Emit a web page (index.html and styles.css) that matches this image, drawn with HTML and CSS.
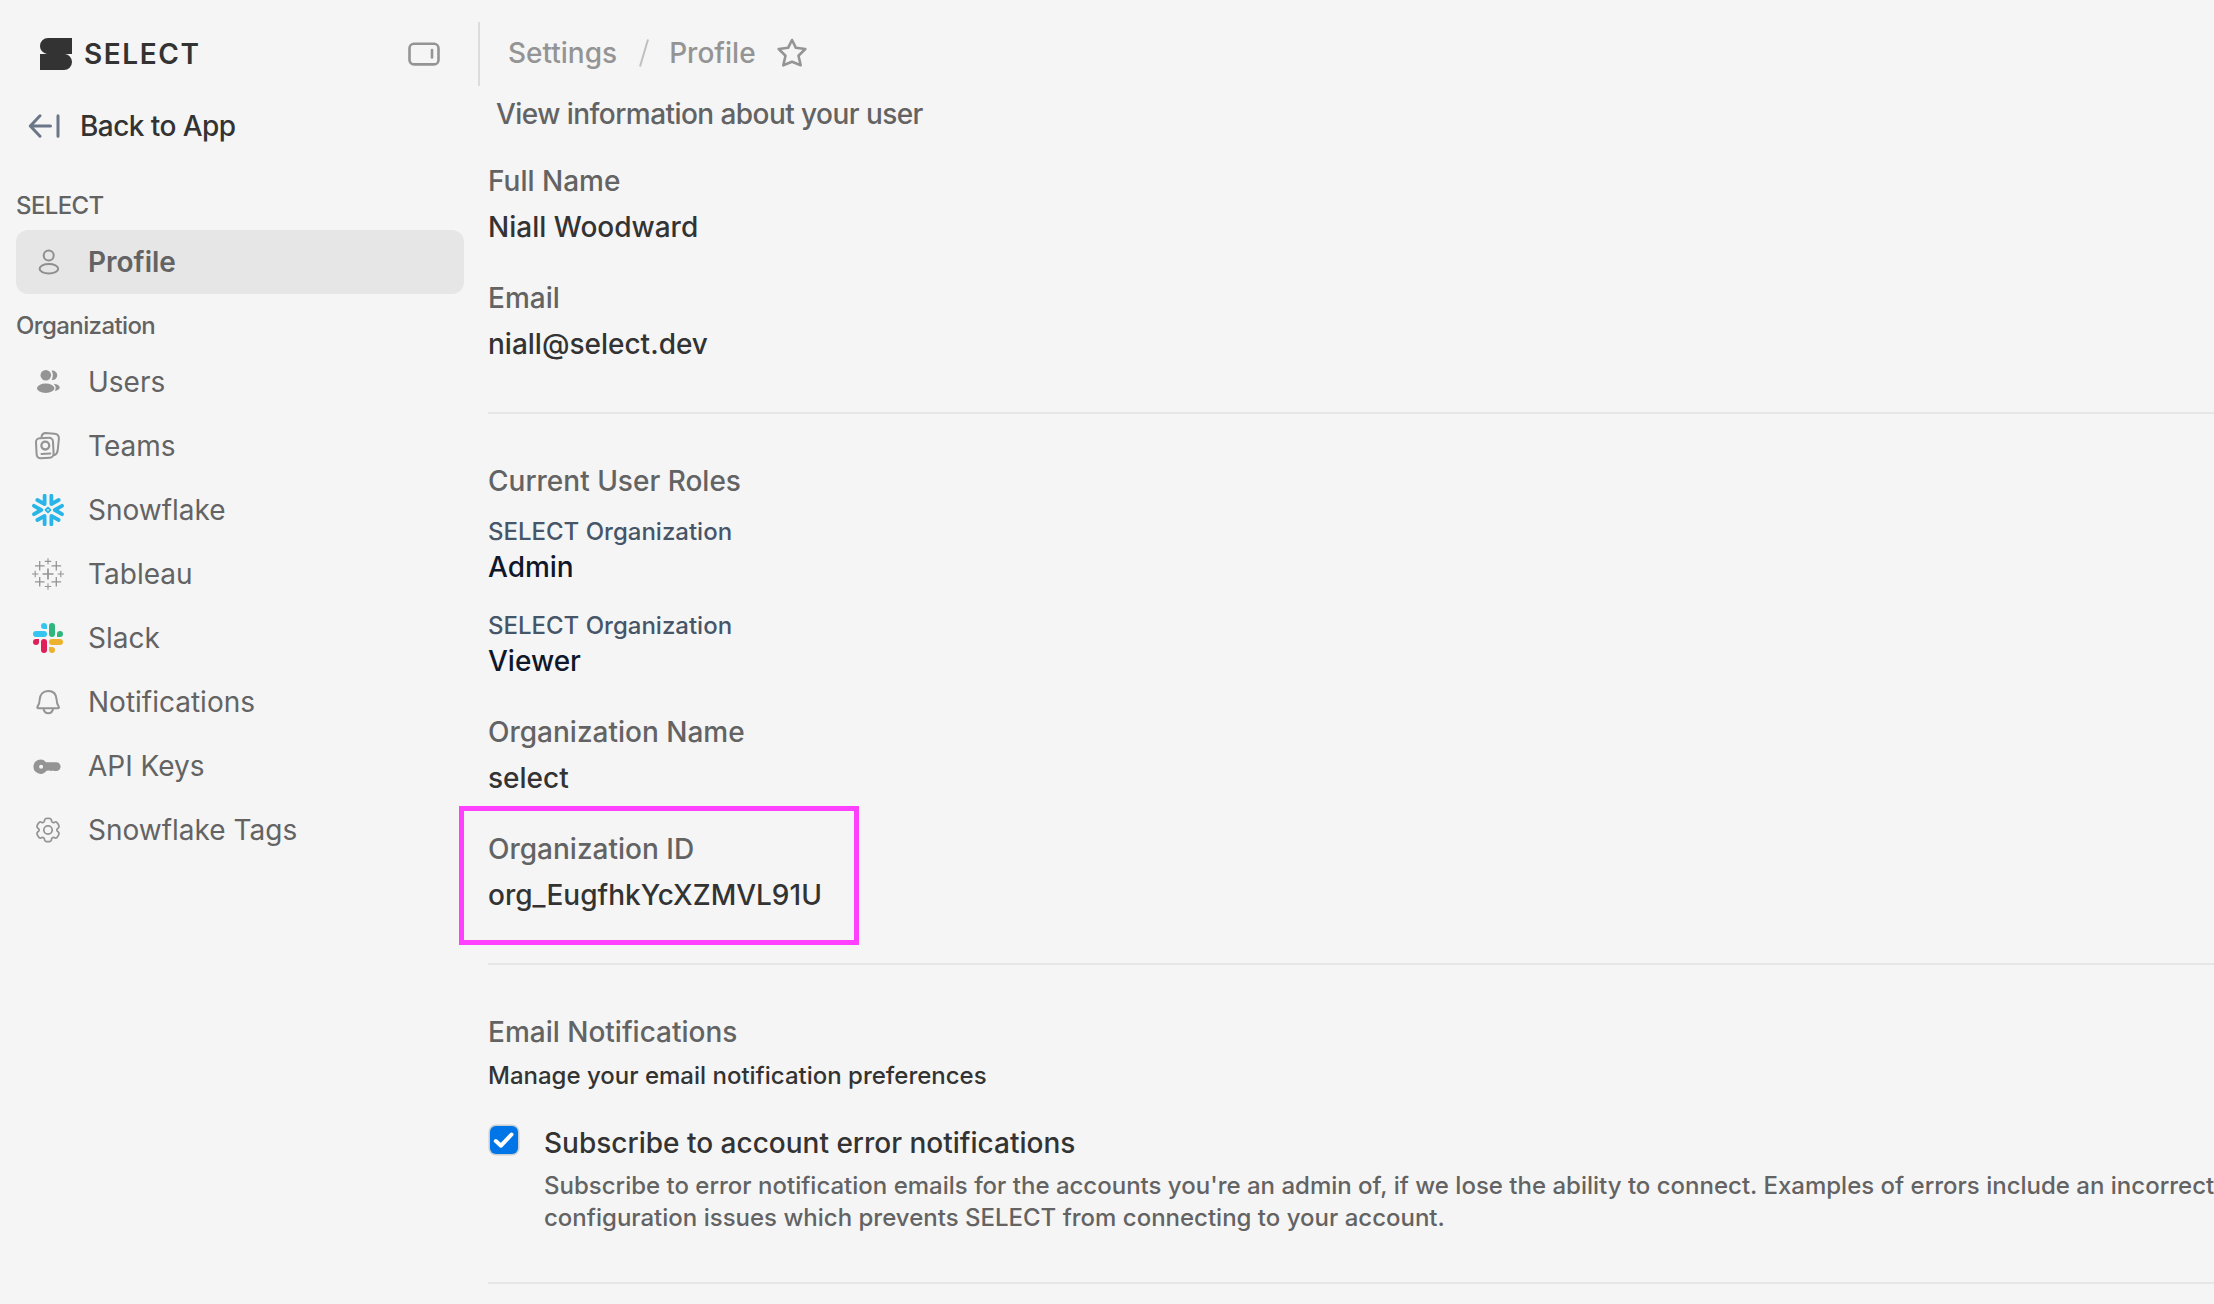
FILE: index.html
```html
<!DOCTYPE html>
<html lang="en">
<head>
  <meta charset="UTF-8" />
  <meta name="viewport" content="width=device-width, initial-scale=1.0" />
  <title>Profile - Settings</title>
  <link rel="stylesheet" href="styles.css">
</head>
<body>
  <div class="app">
    <aside class="sidebar">
      <div class="brand">
        <svg class="brand-logo" viewBox="0 0 32 32"><path d="M8 0H32V16H25A8 8 0 0 1 32 24A8 8 0 0 1 24 32H0V16H7A8 8 0 0 1 0 8A8 8 0 0 1 8 0Z" fill="#333"/></svg>
        <span class="brand-name">SELECT</span>
        <svg class="collapse" viewBox="0 0 32 32" fill="none" stroke="#949494" stroke-width="2.6" stroke-linecap="round"><rect x="1.500" y="5.800" width="29" height="20.600" rx="4.500"/><path d="M24 12v7.500"/></svg>
      </div>
      <a class="back">
        <svg class="back-icon" viewBox="0 0 32 24" fill="none" stroke="#6b7789" stroke-width="3" stroke-linecap="round" stroke-linejoin="round"><path d="M12 1.800L2.300 12L12 22.200M2.300 12H22.500M30 1.800V22.200"/></svg>
        Back to App
      </a>

      <div class="nav-title">SELECT</div>
      <nav class="nav">
        <a class="nav-item active">
          <svg class="icon" viewBox="-16 -16 32 32" fill="none" stroke="#8f8f8f" stroke-width="2"><circle cx=".7" cy="-6.500" r="5"/><ellipse cx=".9" cy="6.700" rx="9.300" ry="4.700"/></svg>
          Profile
        </a>
      </nav>

      <div class="nav-title">Organization</div>
      <nav class="nav">
        <a class="nav-item">
          <svg class="icon" viewBox="-16 -16 32 32" fill="#949494"><circle cx="-2.200" cy="-6.700" r="5.300"/><ellipse cx="-2.300" cy="6.300" rx="8.700" ry="4.700"/><path d="M3.600-11.300A4.700 4.700 0 1 1 3.600-2.100Q6.200-6.700 3.600-11.300ZM5.600 1.800C9 2.300 11.700 3.500 11.700 5.500S9.500 8.400 6.800 8.900Q9.200 5 5.600 1.800Z"/></svg>
          Users
        </a>
        <a class="nav-item">
          <svg class="icon" viewBox="-16 -16 32 32" fill="none" stroke="#949494" stroke-width="2" stroke-linecap="round"><rect x="-11.800" y="-8.200" width="17" height="20" rx="4" transform="rotate(-3)"/><path d="M-6.500-9.500Q-5.500-12.800-2.500-12.900L6.500-12.300Q11-12 10.900-7.500L9.700 4.500Q9.200 8 6.500 9"/><circle cx="-2.700" cy="-.4" r="3.900" stroke-width="2.300"/><path d="M-6.500 8L2.300 7.500"/></svg>
          Teams
        </a>
        <a class="nav-item">
          <svg class="icon" viewBox="-16 -16 32 32" fill="none" stroke="#29b5e8" stroke-width="3.800" stroke-linecap="round" stroke-linejoin="round">
            <g id="arm"><path d="M14-4.200L6.800 0L14 4.200"/></g>
            <use href="#arm" transform="rotate(60)"/>
            <use href="#arm" transform="rotate(120)"/>
            <use href="#arm" transform="rotate(180)"/>
            <use href="#arm" transform="rotate(240)"/>
            <use href="#arm" transform="rotate(300)"/>
            <path d="M0-2.400L2.400 0L0 2.400L-2.400 0Z" stroke-width="1.900"/>
          </svg>
          Snowflake
        </a>
        <a class="nav-item">
          <svg class="icon" viewBox="-16 -16 32 32" fill="none" stroke="#949494"><path d="M0-5.500V5.500M-5.500 0H5.500" stroke-width="1.700"/><path d="M-8.300-13v9.600M-13-8.200h9.600M8.300-13v9.600M3.500-8.200h9.600M-8.300 3v9.600M-13 7.800h9.600M8.300 3v9.600M3.500 7.800h9.600" stroke-width="1.300"/><path d="M0-15.800v6.400M-3.200-12.600h6.400M0 9.300v6.400M-3.200 12.500h6.400M-12.800-3.200v6.400M-16 0h6.400M12.800-3.200v6.400M9.600 0H16" stroke-width="1.100"/></svg>
          Tableau
        </a>
        <a class="nav-item">
          <svg class="icon" viewBox="-16 -16 32 32">
            <path fill="#36c5f0" d="M-1-9H-4A3 3 0 1 1-1-12ZM-12-7h8a3 3 0 0 1 0 6h-8a3 3 0 0 1 0-6Z"/>
            <path fill="#2eb67d" d="M9-1V-4A3 3 0 1 1 12-1ZM7-12v8a3 3 0 0 1-6 0v-8a3 3 0 0 1 6 0Z"/>
            <path fill="#ecb22e" d="M1 9H4A3 3 0 1 1 1 12ZM12 7H4a3 3 0 0 1 0-6h8a3 3 0 0 1 0 6Z"/>
            <path fill="#e01e5a" d="M-9 1V4A3 3 0 1 1-12 1ZM-7 12V4a3 3 0 0 1 6 0v8a3 3 0 0 1-6 0Z"/>
          </svg>
          Slack
        </a>
        <a class="nav-item">
          <svg class="icon" viewBox="-16 -16 32 32" fill="none" stroke="#949494" stroke-width="2" stroke-linejoin="round"><path d="M.2-11C-5-11-8-7.500-8.300-2.500C-8.500 1.500-9 2.500-10.200 4.200C-11.300 5.800-10.600 6.200-9.500 6.200H9.700C11 6.200 11.500 5.800 10.500 4.200C9.300 2.500 8.800 1.500 8.600-2.500C8.300-7.500 5.400-11 .2-11ZM-4.600 6.500C-4 9.500-2 11.200.3 11.200S4.600 9.500 5.100 6.500"/></svg>
          Notifications
        </a>
        <a class="nav-item">
          <svg class="icon" viewBox="-16 -16 32 32" fill="#949494"><path fill-rule="evenodd" d="M-7.300-6.600C-4.800-6.600-3.200-5.500-2-3.700H8.300A4.300 4.300 0 0 1 8.300 4.900Q6.500 5.300 5 4.500Q3 5.300 1.500 4.500L-1.500 4.800C-2.800 6.800-4.800 8-7.300 8A7.300 7.300 0 0 1-7.300-6.600ZM-6.900-1.300A2 2 0 1 0-6.900 2.700A2 2 0 1 0-6.900-1.300Z"/></svg>
          API Keys
        </a>
        <a class="nav-item">
          <svg class="icon" viewBox="-1.700 -1.700 27.400 27.400" fill="none" stroke="#949494" stroke-width="1.500"><circle cx="12" cy="12" r="3.600"/><path d="M13.765 2.152C13.398 2 12.932 2 12 2s-1.398 0-1.765.152a2 2 0 0 0-1.083 1.083c-.092.223-.129.484-.143.863a1.620 1.620 0 0 1-.79 1.353a1.620 1.620 0 0 1-1.567.008c-.336-.178-.579-.276-.82-.308a2 2 0 0 0-1.478.396C4.040 5.790 3.806 6.193 3.340 7s-.7 1.210-.751 1.605a2 2 0 0 0 .396 1.479c.148.192.355.353.676.555c.473.297.777.803.777 1.361s-.304 1.064-.777 1.360c-.321.203-.529.364-.676.556a2 2 0 0 0-.396 1.479c.052.394.285.798.75 1.605c.467.807.7 1.210 1.015 1.453a2 2 0 0 0 1.479.396c.24-.032.483-.13.819-.308a1.620 1.620 0 0 1 1.567.008c.483.28.77.795.79 1.353c.014.38.05.64.143.863a2 2 0 0 0 1.083 1.083C10.602 22 11.068 22 12 22s1.398 0 1.765-.152a2 2 0 0 0 1.083-1.083c.092-.223.129-.483.143-.863c.02-.558.307-1.074.79-1.353a1.620 1.620 0 0 1 1.567-.008c.336.178.579.276.819.308a2 2 0 0 0 1.479-.396c.315-.242.548-.646 1.014-1.453s.7-1.210.751-1.605a2 2 0 0 0-.396-1.479c-.148-.192-.355-.353-.676-.555A1.620 1.620 0 0 1 19.562 12c0-.558.304-1.064.777-1.360c.321-.203.529-.364.676-.556a2 2 0 0 0 .396-1.479c-.052-.394-.285-.798-.75-1.605c-.467-.807-.7-1.210-1.015-1.453a2 2 0 0 0-1.479-.396c-.24.032-.483.13-.82.308a1.620 1.620 0 0 1-1.566-.008a1.620 1.620 0 0 1-.79-1.353c-.014-.38-.05-.64-.143-.863a2 2 0 0 0-1.083-1.083Z"/></svg>
          Snowflake Tags
        </a>
      </nav>
    </aside>

    <main class="main">
      <header class="topbar">
        <span class="crumb">Settings</span>
        <svg class="slash" viewBox="0 0 12 30"><path d="M2 28.500L10 1.500" stroke="#c0c0c0" stroke-width="2" fill="none"/></svg>
        <span class="crumb">Profile</span>
        <svg class="star" viewBox="-16 -16 32 32" fill="none" stroke="#949494" stroke-width="2.600" stroke-linejoin="round"><path d="M0-13L3.900-5.200L13.300-4L6.500 2.700L8.700 12.300L0 8.800L-8.700 12.300L-6.500 2.700L-13.300-4L-3.900-5.200Z"/></svg>
      </header>
      <p class="subtitle">View information about your user</p>

      <div class="content">
        <section class="section">
          <div class="field">
            <div class="label">Full Name</div>
            <div class="value">Niall Woodward</div>
          </div>
          <div class="field">
            <div class="label">Email</div>
            <div class="value">niall@select.dev</div>
          </div>
        </section>

        <section class="section">
          <div class="roles">
            <div class="label">Current User Roles</div>
            <div class="role">
              <div class="role-org">SELECT Organization</div>
              <div class="role-name">Admin</div>
            </div>
            <div class="role">
              <div class="role-org">SELECT Organization</div>
              <div class="role-name">Viewer</div>
            </div>
          </div>
          <div class="field">
            <div class="label">Organization Name</div>
            <div class="value">select</div>
          </div>
          <div class="field highlighted">
            <div class="label">Organization ID</div>
            <div class="value">org_EugfhkYcXZMVL91U</div>
          </div>
        </section>

        <section class="section">
          <div class="label">Email Notifications</div>
          <div class="hint">Manage your email notification preferences</div>
          <div class="subscribe">
            <span class="checkbox"><svg viewBox="0 0 28 28" fill="none" stroke="#fff" stroke-width="4" stroke-linecap="round" stroke-linejoin="round"><path d="M5.800 15L11 19.700L21.500 8.500"/></svg></span>
            <div>
              <div class="value">Subscribe to account error notifications</div>
              <p class="description">Subscribe to error notification emails for the accounts you're an admin of, if we lose the ability to connect. Examples of errors include an incorrect<br>configuration issues which prevents SELECT from connecting to your account.</p>
            </div>
          </div>
        </section>
      </div>
    </main>
  </div>
</body>
</html>
```
FILE: styles.css
```css
* {
  margin: 0;
  padding: 0;
  box-sizing: border-box;
}
body {
  font-family: Inter, "Liberation Sans", sans-serif;
  font-size: 28px;
  line-height: 40px;
  background: #f5f5f5;
  color: #333;
  overflow: hidden;
}
svg {
  display: block;
  flex-shrink: 0;
}
.app {
  display: flex;
  height: 100vh;
}

/* Sidebar */
.sidebar {
  width: 478px;
  flex-shrink: 0;
  padding: 34px 14px 0 16px;
}
.brand {
  display: flex;
  align-items: center;
  height: 40px;
  padding: 0 24px;
}
.brand-logo {
  width: 32px;
  height: 32px;
}
.brand-name {
  margin-left: 12px;
  font-weight: 600;
  letter-spacing: 1.6px;
}
.collapse {
  width: 32px;
  height: 32px;
  margin-left: auto;
}
.back {
  display: flex;
  align-items: center;
  gap: 20px;
  height: 40px;
  margin-top: 32px;
  padding-left: 12px;
  font-weight: 500;
  letter-spacing: -0.56px;
}
.back-icon {
  width: 32px;
  height: 24px;
}
.nav-title {
  margin: 16px 0 8px;
  font-size: 24px;
  line-height: 32px;
  color: #636363;
  font-weight: 500;
  letter-spacing: -0.6px;
}
.back + .nav-title {
  margin-top: 44px;
}
.nav-item {
  display: flex;
  align-items: center;
  gap: 24px;
  height: 64px;
  padding-left: 16px;
  border-radius: 12px;
  color: #636363;
}
.nav-item.active {
  background: #e6e6e6;
  font-weight: 600;
}
.icon {
  width: 32px;
  height: 32px;
}

/* Main column */
.main {
  flex: 1;
  min-width: 0;
  padding-top: 22px;
}
.topbar {
  display: flex;
  align-items: center;
  height: 64px;
  padding: 0 0 2px 28px;
  border-left: 2px solid #dcdcdc;
  color: #949494;
}
.crumb {
  font-weight: 500;
}
.slash {
  width: 12px;
  height: 30px;
  margin: 0 19px 0 21px;
}
.star {
  width: 32px;
  height: 32px;
  margin-left: 20px;
}
.subtitle {
  margin-top: 8px;
  padding-left: 18px;
  color: #636363;
  font-weight: 500;
  letter-spacing: -0.56px;
}
.content {
  margin-left: 10px;
  padding-top: 27px;
}
.section {
  padding-bottom: 48px;
  margin-bottom: 47px;
  border-bottom: 2px solid #e6e6e6;
}
.field + .field {
  margin-top: 31px;
}
.label {
  color: #636363;
  font-weight: 500;
}
.value {
  font-weight: 500;
}
.field .value {
  margin-top: 6px;
}
.field:last-child {
  padding-bottom: 0;
}
.roles {
  margin-bottom: 31px;
}
.role {
  margin-top: 15px;
}
.role + .role {
  margin-top: 23px;
}
.role-org {
  font-size: 24px;
  line-height: 32px;
  color: #475569;
  font-weight: 500;
}
.role-name {
  margin-top: -1px;
  color: #0f172a;
  font-weight: 500;
}

/* Outline around the organization id */
.highlighted {
  position: relative;
}
.highlighted::after {
  content: "";
  position: absolute;
  left: -29px;
  top: -23px;
  width: 390px;
  height: 129px;
  border: 5px solid #ff40ff;
}

/* Email notifications */
.hint {
  margin-top: 8px;
  font-size: 24px;
  line-height: 32px;
  font-weight: 500;
}
.subscribe {
  display: flex;
  gap: 26px;
  margin-top: 31px;
  padding-left: 2px;
}
.checkbox {
  flex-shrink: 0;
  width: 28px;
  height: 28px;
  margin-top: 3px;
  border-radius: 6px;
  background: #0075e8;
  box-shadow: 0 0 0 1.5px #c9ced3;
}
.description {
  margin-top: 7px;
  font-size: 24px;
  line-height: 32px;
  color: #636363;
  font-weight: 500;
  white-space: nowrap;
}
```
